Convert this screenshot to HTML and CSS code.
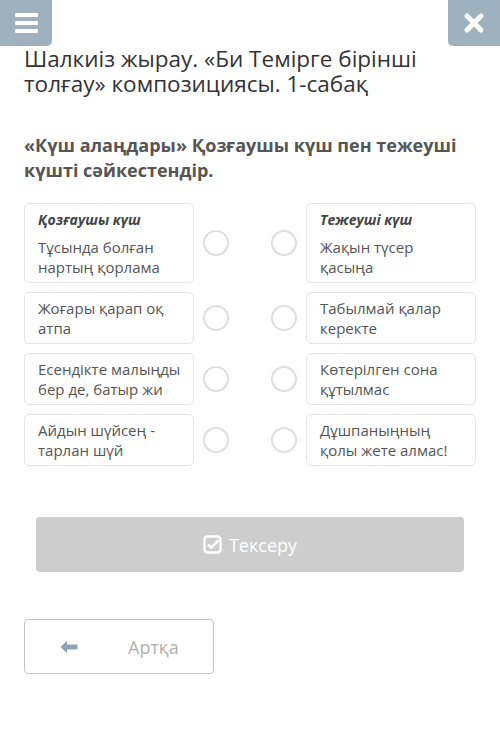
FILE: index.html
```html
<!DOCTYPE html>
<html lang="kk">
<head>
  <meta charset="UTF-8" />
  <meta name="viewport" content="width=device-width, initial-scale=1.0"/>
  <title>Шалкиіз жырау. 1-сабақ</title>
  <link rel="stylesheet" href="styles.css">
</head>
<body>
  <div class="topbar">
    <button class="corner menu" aria-label="Мәзір">
      <span></span><span></span><span></span>
    </button>
    <button class="corner close" aria-label="Жабу">
      <svg width="22" height="22" viewBox="0 0 22 22">
        <path d="M4 4 L18 18 M18 4 L4 18" stroke="#fff" stroke-width="5" stroke-linecap="round"/>
      </svg>
    </button>
  </div>

  <div class="page">
    <h1 class="title">Шалкиіз жырау. «Би Темірге бірінші толғау» композициясы. 1-сабақ</h1>

    <p class="question">«Күш алаңдары» Қозғаушы күш пен тежеуші күшті сәйкестендір.</p>

    <div class="pairs">
      <div class="pair">
        <div class="card">
          <div class="card-head">Қозғаушы күш</div>
          Тұсында болған нартың қорлама
        </div>
        <div class="radios"><span class="radio"></span><span class="radio"></span></div>
        <div class="card">
          <div class="card-head">Тежеуші күш</div>
          Жақын түсер қасыңа
        </div>
      </div>
      <div class="pair">
        <div class="card">Жоғары қарап оқ атпа</div>
        <div class="radios"><span class="radio"></span><span class="radio"></span></div>
        <div class="card">Табылмай қалар керекте</div>
      </div>
      <div class="pair">
        <div class="card">Есендікте малыңды бер де, батыр жи</div>
        <div class="radios"><span class="radio"></span><span class="radio"></span></div>
        <div class="card">Көтерілген сона құтылмас</div>
      </div>
      <div class="pair">
        <div class="card">Айдын шүйсең - тарлан шүй</div>
        <div class="radios"><span class="radio"></span><span class="radio"></span></div>
        <div class="card">Дұшпаныңның қолы жете алмас!</div>
      </div>
    </div>

    <button class="check" disabled>
      <svg width="19" height="19" viewBox="0 0 19 19">
        <rect x="1.5" y="1.5" width="16" height="16" rx="3" fill="none" stroke="#fff" stroke-width="2.4"/>
        <path d="M5 9.5 L8.3 12.6 L15.5 5" fill="none" stroke="#fff" stroke-width="2.6"/>
      </svg>
      Тексеру
    </button>

    <button class="back">
      <svg width="18" height="14" viewBox="0 0 18 14">
        <path d="M0.5 7 L7 0.8 L7 4.6 L17.5 4.6 L17.5 9.4 L7 9.4 L7 13.2 Z" fill="#8fa3b4"/>
      </svg>
      <span>Артқа</span>
    </button>
  </div>
</body>
</html>
```

FILE: styles.css
```css
* { box-sizing: border-box; }
body {
  margin: 0;
  background: #fff;
  font-family: 'Open Sans', 'Noto Sans', sans-serif;
  color: #333;
}
button { font-family: inherit; }

.topbar {
  display: flex;
  justify-content: space-between;
  height: 46px;
}
.corner {
  width: 52px;
  height: 46px;
  border: none;
  background: #9fb1bf;
  display: flex;
  flex-direction: column;
  justify-content: center;
  align-items: center;
  padding: 0;
}
.menu { border-bottom-right-radius: 5px; gap: 4px; }
.menu span {
  display: block;
  width: 23px;
  height: 4px;
  border-radius: 1px;
  background: #fff;
}
.close { border-bottom-left-radius: 5px; }

.page { padding: 0 24px; }

.title {
  margin: 0;
  font-size: 22.5px;
  font-weight: 400;
  line-height: 25px;
  color: #333;
}
.question {
  margin: 37px 0 20px;
  font-size: 18px;
  font-weight: 700;
  line-height: 25px;
  color: #555;
}

.pairs {
  display: flex;
  flex-direction: column;
  gap: 9px;
}
.pair {
  display: flex;
  align-items: center;
  justify-content: space-between;
}
.card {
  width: 170px;
  padding: 5px 10px 5px 13px;
  border: 1px solid #e6e6e6;
  border-radius: 5px;
  font-size: 15px;
  line-height: 20px;
  color: #555;
}
.card-head {
  font-size: 14px;
  font-weight: 700;
  font-style: italic;
  color: #444;
  margin: 1px 0 7px;
}
.radios {
  display: flex;
  gap: 42px;
}
.radio {
  width: 26px;
  height: 26px;
  border: 2px solid #dedede;
  border-radius: 50%;
}

.check {
  display: flex;
  align-items: center;
  justify-content: center;
  gap: 7px;
  width: 428px;
  height: 55px;
  margin: 51px 0 0 12px;
  border: none;
  border-radius: 4px;
  background: #cdcdcd;
  color: #fff;
  font-size: 18px;
}

.back {
  display: flex;
  align-items: center;
  width: 190px;
  height: 55px;
  margin-top: 47px;
  padding: 0 0 0 35px;
  border: 1px solid #c4c4c4;
  border-radius: 4px;
  background: #fff;
  color: #b0b0b0;
  font-size: 18px;
}
.back span { margin-left: 50px; }
```
